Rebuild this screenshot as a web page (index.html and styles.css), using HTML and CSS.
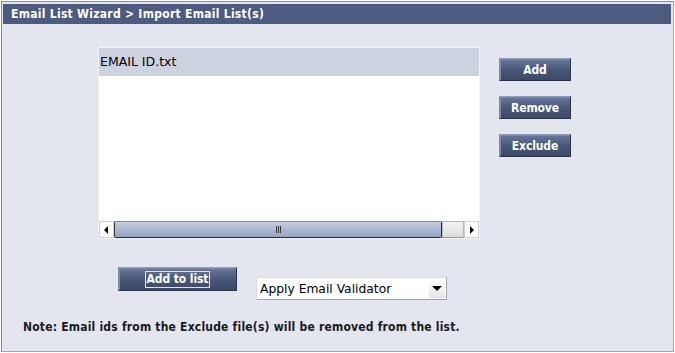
FILE: index.html
```html
<!DOCTYPE html>
<html>
<head>
<meta charset="utf-8">
<link rel="stylesheet" href="styles.css">
</head>
<body>
<div class="frame">
  <div class="header">Email List Wizard &gt; Import Email List(s)</div>
  <div class="content">
    <div class="top-row">
      <div class="listbox">
        <div class="list-items">
          <div class="item selected">EMAIL ID.txt</div>
        </div>
        <div class="hscroll">
          <div class="arrow left"><span class="tri-l"></span></div>
          <div class="thumb"><span class="grip"></span></div>
          <div class="track"></div>
          <div class="arrow right"><span class="tri-r"></span></div>
        </div>
      </div>
      <div class="side-buttons">
        <button class="btn">Add</button>
        <button class="btn">Remove</button>
        <button class="btn">Exclude</button>
      </div>
    </div>
    <div class="action-row">
      <button class="btn wide"><span class="focus">Add to list</span></button>
      <div class="select">
        <span class="select-text">Apply Email Validator</span>
        <span class="select-arrow"><span class="tri-d"></span></span>
      </div>
    </div>
    <div class="note">Note: Email ids from the Exclude file(s) will be removed from the list.</div>
  </div>
</div>
</body>
</html>
```

FILE: styles.css
```css
* { box-sizing: border-box; }
html, body { margin: 0; padding: 0; background: #ffffff; }
body { width: 675px; height: 353px; padding: 1px; }

.frame {
  width: 673px;
  height: 351px;
  border: 1px solid #a8a8a8;
  border-left-color: #8c8c8c;
  border-top-color: #8c8c8c;
  padding: 2px 2px 2px 1px;
  background: #e3e6ef;
  display: flex;
  flex-direction: column;
}

.header {
  height: 20px;
  background: #4c5b7f;
  color: #ffffff;
  font-family: Tahoma, "DejaVu Sans Condensed", sans-serif;
  font-weight: bold;
  font-size: 12px;
  line-height: 20px;
  padding-left: 8px;
  letter-spacing: 0.28px;
}

.content {
  flex: 1;
  background: #e3e6ef;
  display: flex;
  flex-direction: column;
}

.top-row {
  display: flex;
  padding-left: 95px;
  padding-top: 23px;
}

.listbox {
  width: 382px;
  height: 192px;
  background: #ffffff;
  border: 1px solid #f2f3f7;
  display: flex;
  flex-direction: column;
}

.list-items { flex: 1; }

.item {
  height: 28px;
  line-height: 28px;
  padding-left: 1px;
  font-family: Tahoma, "DejaVu Sans", sans-serif;
  font-size: 12.5px;
  color: #000000;
}
.item.selected { background: #cdd2e0; }

.hscroll {
  height: 17px;
  display: flex;
  background: #e4e6ee;
}
.arrow {
  width: 15px;
  height: 17px;
  background: #ffffff;
  border: 1px solid #c9cfdc;
  display: flex;
  align-items: center;
  justify-content: center;
}
.tri-l {
  width: 0; height: 0;
  border-top: 4px solid transparent;
  border-bottom: 4px solid transparent;
  border-right: 4px solid #000;
}
.tri-r {
  width: 0; height: 0;
  border-top: 4px solid transparent;
  border-bottom: 4px solid transparent;
  border-left: 4px solid #000;
}
.thumb {
  width: 330px;
  height: 17px;
  background: linear-gradient(#c3cde0, #94a4c4);
  border: 1px solid #2a2a2a;
  border-left-color: #3a3a3a;
  border-top-color: #8a8a8a;
  border-radius: 2px;
  display: flex;
  align-items: center;
  justify-content: center;
}
.grip {
  width: 5px;
  height: 7px;
  border-left: 1px solid #333;
  border-right: 1px solid #333;
  position: relative;
}
.grip::after {
  content: "";
  position: absolute;
  left: 1px;
  top: 0;
  width: 1px;
  height: 7px;
  background: #333;
}
.track {
  width: 22px;
  height: 17px;
  background: linear-gradient(#f4f4f4, #dcdcdc);
  border: 1px solid #b9b9b9;
  border-bottom-color: #999;
}

.side-buttons {
  display: flex;
  flex-direction: column;
  gap: 15px;
  padding-left: 19px;
  padding-top: 11px;
}

.btn {
  width: 72px;
  height: 23px;
  padding: 0;
  background: linear-gradient(#6a789c, #4a5878 50%, #3c4866);
  border: 1px solid #2c344a;
  border-top-color: #8e9ab8;
  border-left-color: #7f8bab;
  box-shadow: inset 1px 1px 0 #7d89a8;
  color: #ffffff;
  font-family: Tahoma, "DejaVu Sans Condensed", sans-serif;
  font-weight: bold;
  font-size: 12px;
  letter-spacing: -0.1px;
  cursor: pointer;
}

.action-row {
  display: flex;
  align-items: flex-start;
  padding-left: 115px;
  padding-top: 28px;
}
.btn.wide {
  width: 119px;
  height: 24px;
  display: flex;
  align-items: center;
  justify-content: center;
}
.focus {
  border: 1px solid #dfe4ef;
  padding: 0 1px;
  line-height: 15px;
}

.select {
  margin-left: 19px;
  margin-top: 10px;
  width: 191px;
  height: 23px;
  background: #ffffff;
  border: 1px solid #a0a4b0;
  border-top-color: #d8dbe3;
  border-left-color: #d8dbe3;
  display: flex;
  align-items: center;
}
.select-text {
  flex: 1;
  padding-left: 3px;
  font-family: Tahoma, "DejaVu Sans", sans-serif;
  font-size: 12.3px;
  color: #000000;
}
.select-arrow {
  width: 16px;
  height: 19px;
  margin-right: 1px;
  display: flex;
  align-items: center;
  justify-content: center;
  background: linear-gradient(#ffffff, #e6e6e6);
}
.tri-d {
  width: 0; height: 0;
  border-left: 5px solid transparent;
  border-right: 5px solid transparent;
  border-top: 5px solid #000;
}

.note {
  padding-left: 20px;
  padding-top: 20px;
  font-family: Tahoma, "DejaVu Sans Condensed", sans-serif;
  font-weight: bold;
  font-size: 12px;
  letter-spacing: 0.2px;
  color: #1a1a1a;
}
```
